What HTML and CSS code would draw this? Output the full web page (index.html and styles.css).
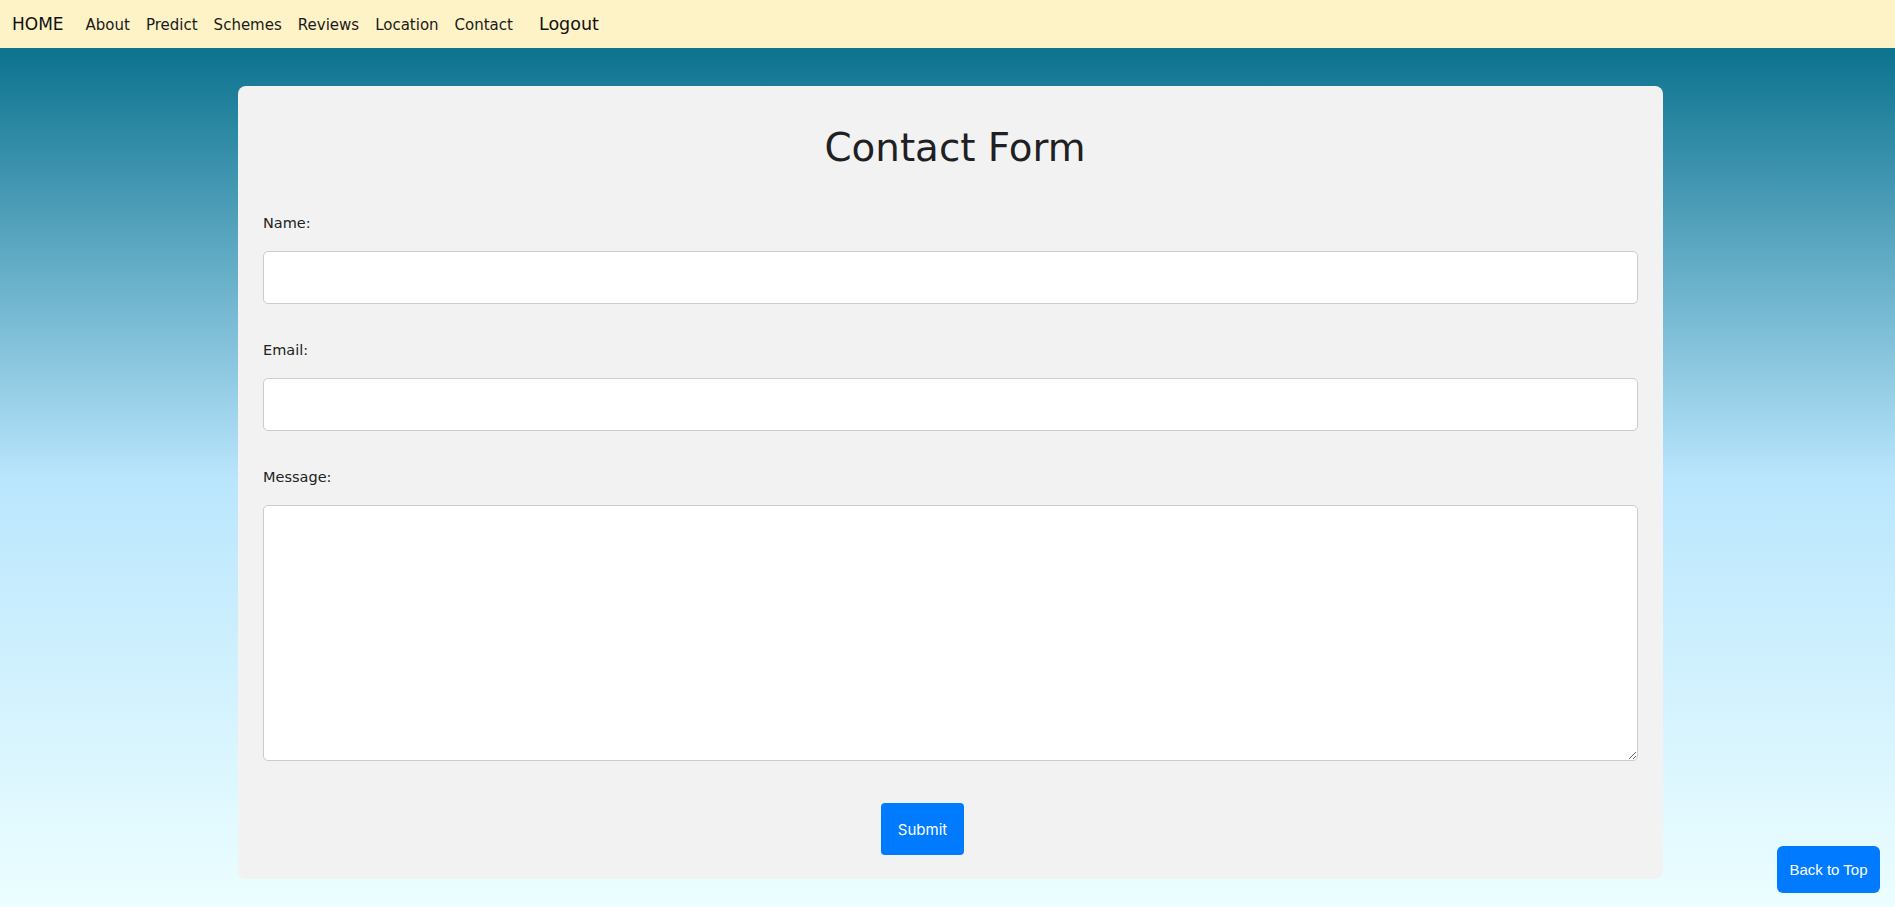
FILE: index.html
```html
<!DOCTYPE html>
<html lang="en">
<head>
<meta charset="utf-8">
<title>Contact Form</title>
<link rel="stylesheet" href="styles.css">
</head>
<body>
<nav class="navbar">
  <a class="brand" href="#">HOME</a>
  <ul class="nav-links">
    <li><a href="#">About</a></li>
    <li><a href="#">Predict</a></li>
    <li><a href="#">Schemes</a></li>
    <li><a href="#">Reviews</a></li>
    <li><a href="#">Location</a></li>
    <li><a href="#">Contact</a></li>
  </ul>
  <a class="logout" href="#">Logout</a>
</nav>
<main class="page">
  <section class="card">
    <h2 class="title">Contact Form</h2>
    <form class="form">
      <div class="group">
        <label for="name">Name:</label>
        <input id="name" type="text">
      </div>
      <div class="group">
        <label for="email">Email:</label>
        <input id="email" type="email">
      </div>
      <div class="group group-message">
        <label for="message">Message:</label>
        <textarea id="message"></textarea>
      </div>
      <div class="actions">
        <button type="submit" class="submit">Submit</button>
      </div>
    </form>
  </section>
</main>
<a class="back-top" href="#">Back to Top</a>
</body>
</html>
```
FILE: styles.css
```css
* { box-sizing: border-box; }
html, body { margin: 0; padding: 0; }
body {
  min-height: 100vh;
  font-family: "DejaVu Sans", "Noto Sans", sans-serif;
  color: #212529;
  background: linear-gradient(to bottom, #0e7490 0%, #0e7490 6%, #bae6fd 53%, #ecfeff 100%);
}
a { text-decoration: none; color: inherit; }

.navbar {
  height: 48px;
  background: #fef3c7;
  display: flex;
  align-items: center;
  padding-left: 12px;
}
.brand {
  font-size: 17px;
  color: #111;
  margin-right: 22px;
}
.nav-links {
  list-style: none;
  margin: 0;
  padding: 0;
  display: flex;
  gap: 16px;
}
.nav-links a {
  font-size: 15px;
  color: #1a1a1a;
}
.logout {
  font-size: 17.5px;
  color: #111;
  margin-left: 26px;
}

.page {
  padding: 38px 0 20px 6px;
}
.card {
  width: 1425px;
  margin: 0 auto;
  background: #f2f2f2;
  border-radius: 8px;
  padding: 25px 25px 24px;
}
.title {
  margin: 14px 0 43px;
  text-align: center;
  font-size: 38.8px;
  font-weight: 400;
  line-height: 45px;
  color: #1f1f24;
  padding-left: 9px;
}
.group { margin-bottom: 36px; }
.group label {
  display: block;
  font-size: 14.5px;
  line-height: 21px;
  color: #222;
  margin-bottom: 17px;
}
.group input,
.group textarea {
  display: block;
  width: 100%;
  height: 53px;
  border: 1px solid #cccccc;
  border-radius: 5px;
  background: #fff;
  font: inherit;
}
.group textarea { height: 256px; resize: vertical; }
.group-message { margin-bottom: 42px; }

.actions {
  display: flex;
  justify-content: center;
  padding-right: 56px;
}
.submit {
  width: 83px;
  height: 52px;
  border: none;
  border-radius: 4px;
  background: #007bff;
  color: #fff;
  font-family: Inter, "Noto Sans", sans-serif;
  font-size: 15px;
}

.back-top {
  position: fixed;
  right: 15px;
  bottom: 14px;
  width: 103px;
  height: 47px;
  display: flex;
  align-items: center;
  justify-content: center;
  background: #007bff;
  color: #fff;
  border-radius: 6px;
  font-family: "Liberation Sans", Arial, sans-serif;
  font-size: 15px;
}
```
